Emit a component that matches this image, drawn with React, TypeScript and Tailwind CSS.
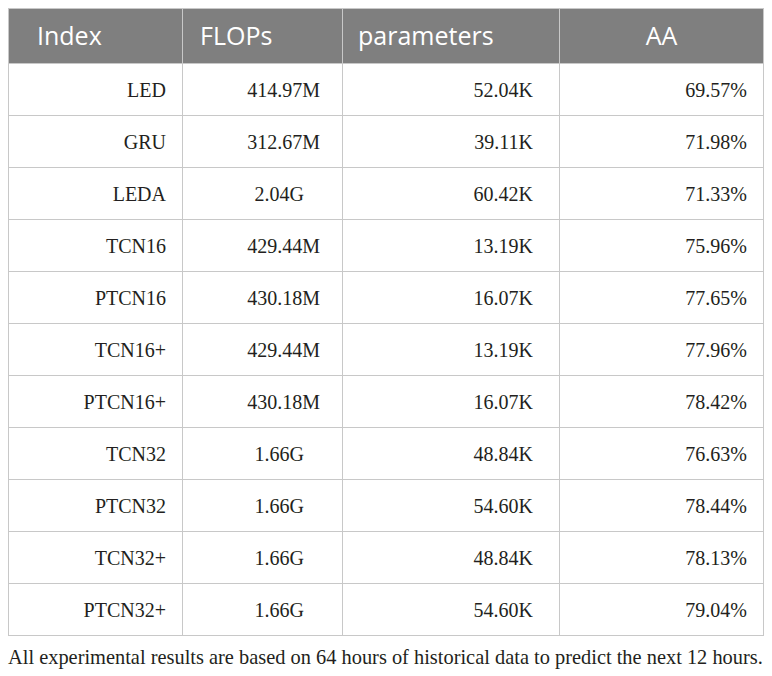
const rows = [
  ['LED', '414.97M', '52.04K', '69.57%'],
  ['GRU', '312.67M', '39.11K', '71.98%'],
  ['LEDA', '2.04G', '60.42K', '71.33%'],
  ['TCN16', '429.44M', '13.19K', '75.96%'],
  ['PTCN16', '430.18M', '16.07K', '77.65%'],
  ['TCN16+', '429.44M', '13.19K', '77.96%'],
  ['PTCN16+', '430.18M', '16.07K', '78.42%'],
  ['TCN32', '1.66G', '48.84K', '76.63%'],
  ['PTCN32', '1.66G', '54.60K', '78.44%'],
  ['TCN32+', '1.66G', '48.84K', '78.13%'],
  ['PTCN32+', '1.66G', '54.60K', '79.04%'],
];

const App = () => {
  return (
    <div className="w-[772px] h-[676px] bg-white pt-2 pl-2 overflow-hidden">
      <table className="w-[755px] border-collapse table-fixed">
        <colgroup>
          <col className="w-[174px]" />
          <col className="w-[160px]" />
          <col className="w-[217px]" />
          <col className="w-[204px]" />
        </colgroup>
        <thead>
          <tr className="h-[55px] bg-[#7f7f7f] text-white font-['Open_Sans',sans-serif] text-[25px]">
            <th className="border border-[#c8c8c8] text-left font-normal pl-[28px]">Index</th>
            <th className="border border-[#c8c8c8] text-left font-normal pl-[17px]">FLOPs</th>
            <th className="border border-[#c8c8c8] text-left font-normal pl-[15px]">parameters</th>
            <th className="border border-[#c8c8c8] text-center font-normal">AA</th>
          </tr>
        </thead>
        <tbody className="font-['Liberation_Serif',serif] text-[20px] text-[#231f20]">
          {rows.map((r) => {
            const giga = r[1].endsWith('G');
            return (
              <tr key={r[0]} className="h-[52px]">
                <td className="border border-[#c8c8c8] text-right pr-[16px]">{r[0]}</td>
                <td className={`border border-[#c8c8c8] text-right ${giga ? 'pr-[38px]' : 'pr-[22px]'}`}>{r[1]}</td>
                <td className="border border-[#c8c8c8] text-right pr-[26px]">{r[2]}</td>
                <td className="border border-[#c8c8c8] text-right pr-[16px]">{r[3]}</td>
              </tr>
            );
          })}
        </tbody>
      </table>
      <p className="mt-[8px] font-['Liberation_Serif',serif] text-[20.4px] text-[#231f20] leading-[26px] whitespace-nowrap">
        All experimental results are based on 64 hours of historical data to predict the next 12 hours.
      </p>
    </div>
  );
};

export default App;
